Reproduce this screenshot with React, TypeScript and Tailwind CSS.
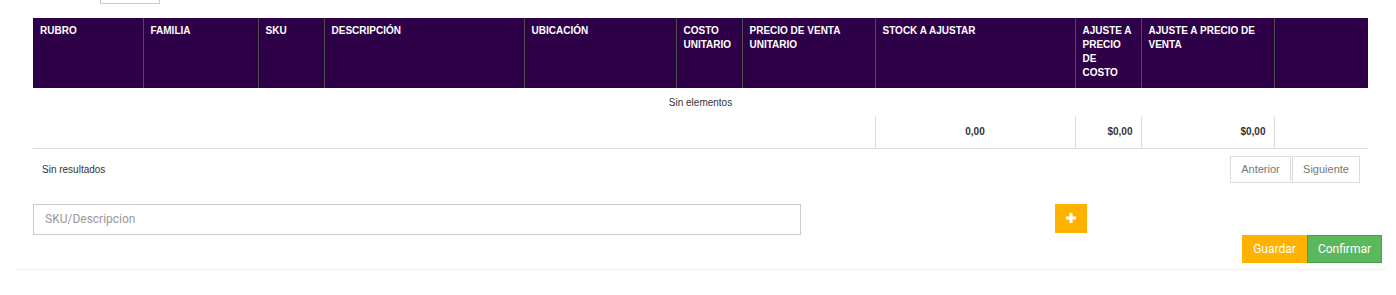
import React from "react";

const COL_WIDTHS = [110, 115, 66, 200, 152, 66, 133, 200, 66, 133, 94];

const HEADERS: React.ReactNode[] = [
  "RUBRO",
  "FAMILIA",
  "SKU",
  "DESCRIPCIÓN",
  "UBICACIÓN",
  <>COSTO<br />UNITARIO</>,
  <>PRECIO DE VENTA<br />UNITARIO</>,
  "STOCK A AJUSTAR",
  <>AJUSTE A<br />PRECIO<br />DE<br />COSTO</>,
  <>AJUSTE A PRECIO DE<br />VENTA</>,
  "",
];

function PlusIcon() {
  return (
    <svg width="10" height="10" viewBox="0 0 10 10" fill="white">
      <rect x="3.5" y="0" width="3" height="10" />
      <rect x="0" y="3.5" width="10" height="3" />
    </svg>
  );
}

export default function App() {
  return (
    <div className="w-[1396px] h-[295px] bg-white overflow-hidden font-['Liberation_Sans',Arial,sans-serif]">
      <div className="ml-[15px] w-[1371px] pl-[18px] pr-[4px] pb-[6px] rounded-b-[4px] shadow-[0_1px_1px_rgba(0,0,0,0.07)]">
        {/* cut-off page size select */}
        <div className="ml-[67px] w-[60px] h-[4px] border border-t-0 border-[#cccccc]" />

        {/* Table */}
        <table className="mt-[14px] w-[1335px] table-fixed border-collapse text-[10px] text-[#333]">
          <colgroup>
            {COL_WIDTHS.map((w, i) => (
              <col key={i} style={{ width: w }} />
            ))}
          </colgroup>
          <thead>
            <tr className="bg-[#2e0047]">
              {HEADERS.map((h, i) => (
                <th
                  key={i}
                  className={`h-[70px] align-top text-left font-bold text-white leading-[14px] pt-[6px] px-[7px] whitespace-nowrap ${
                    i > 0 ? "border-l border-[#4f4f4f]" : ""
                  }`}
                >
                  {h}
                </th>
              ))}
            </tr>
          </thead>
          <tbody>
            <tr>
              <td colSpan={11} className="h-[28px] text-center align-middle">
                Sin elementos
              </td>
            </tr>
            <tr>
              <td colSpan={7} className="h-[32px] border-b border-[#dddddd]" />
              <td className="border-l border-b border-[#dddddd] text-center font-bold">0,00</td>
              <td className="border-l border-b border-[#dddddd] text-right pr-[8px] font-bold">$0,00</td>
              <td className="border-l border-b border-[#dddddd] text-right pr-[8px] font-bold">$0,00</td>
              <td className="border-l border-b border-[#dddddd]" />
            </tr>
          </tbody>
        </table>

        {/* Pagination */}
        <div className="w-[1335px] mt-[7px] flex items-center justify-between pl-[9px] pr-[8px]">
          <span className="text-[10px] text-[#333]">Sin resultados</span>
          <div className="flex gap-[1px]">
            <button className="w-[61px] h-[27px] border border-[#dddddd] bg-white text-[11px] text-[#777]">
              Anterior
            </button>
            <button className="w-[68px] h-[27px] border border-[#dddddd] bg-white text-[11px] text-[#777]">
              Siguiente
            </button>
          </div>
        </div>

        {/* Search + add */}
        <div className="mt-[21px] flex items-start font-['Roboto',sans-serif]">
          <input
            type="text"
            placeholder="SKU/Descripcion"
            className="w-[768px] h-[31px] border border-[#cccccc] pl-[11px] text-[12px] text-[#555] placeholder:text-[#999] outline-none"
          />
          <button className="ml-[254px] w-[32px] h-[29px] bg-[#ffb300] flex items-center justify-center">
            <PlusIcon />
          </button>
        </div>

        {/* Actions */}
        <div className="flex justify-end font-['Roboto',sans-serif] text-[12px] text-white">
          <button className="w-[65px] h-[28px] bg-[#ffb300]">Guardar</button>
          <button className="w-[75px] h-[28px] bg-[#5cb85c] border border-[#4a9e4a]">Confirmar</button>
        </div>
      </div>
    </div>
  );
}
